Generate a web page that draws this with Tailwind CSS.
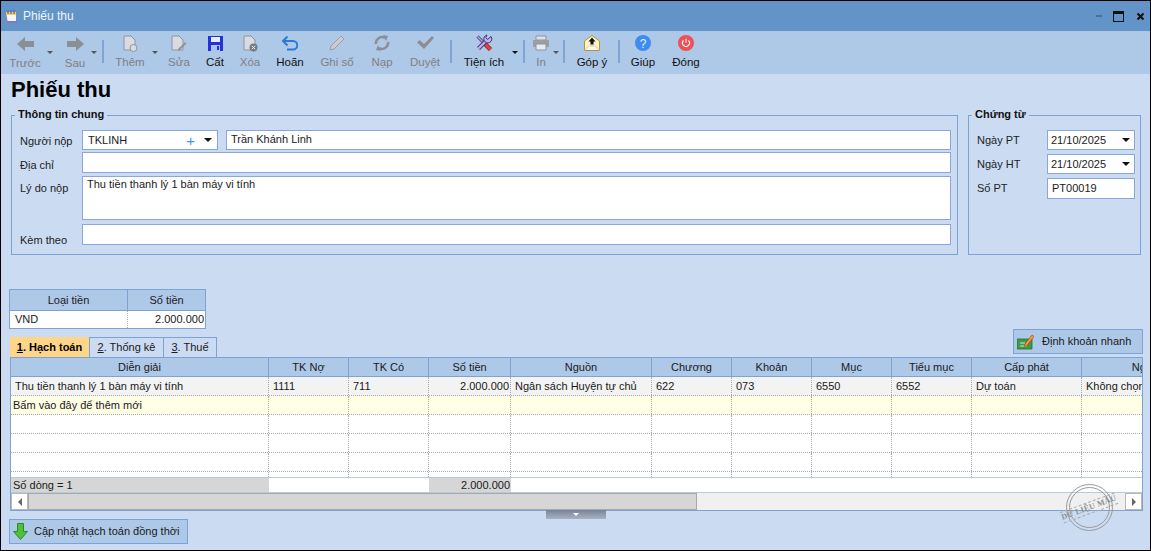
<!DOCTYPE html>
<html lang="en">
  <head>
    <meta charset="UTF-8" />
    <meta name="viewport" content="width=device-width, initial-scale=1.0" />
    <title>Phiếu thu</title>
    <script src="https://cdn.jsdelivr.net/npm/@tailwindcss/browser@4"></script>
  </head>
  <body class="m-0 h-[551px] w-[1151px] overflow-hidden bg-[#cbdcf2] font-['Liberation_Sans',sans-serif] text-[11px] leading-none text-[#1a1a1a]">
    <div class="relative flex h-[551px] w-[1151px] flex-col overflow-hidden border border-black bg-[#cbdcf2]">
      <!-- Title bar -->
      <div class="flex h-[30px] shrink-0 items-center bg-[#6394c8] pl-[3px] text-white">
        <svg class="h-[15px] w-[15px]" viewBox="0 0 15 15">
          <path d="M1 3h10l2 11H3z" fill="#7f78cf" />
          <path d="M2 3h10v9H3.500z" fill="#f4f6fb" />
          <path d="M2 3h10v3H2z" fill="#f3d24e" />
          <path d="M4 1v4M7 1v4M10 1v4" stroke="#6a5db8" stroke-width="1.200" />
        </svg>
        <span class="ml-[4px] text-[12px] text-[#eef4fb]">Phiếu thu</span>
        <div class="ml-auto flex items-center">
          <div class="h-[2px] w-[6px] bg-[#5b6b80]"></div>
          <div class="ml-[11px] h-[11px] w-[11px] border border-t-[3px] border-[#101010]"></div>
          <svg class="ml-[12px] mr-[5px] h-[9px] w-[9px]" viewBox="0 0 9 9">
            <path d="M1.500 1.500l6 6M7.500 1.500l-6 6" stroke="#101010" stroke-width="2" />
          </svg>
        </div>
      </div>

      <!-- Toolbar -->
      <div class="flex h-[43px] shrink-0 items-start bg-[#aec8e8] text-[11.500px]">
        <div class="flex h-[43px] w-[48px] flex-col items-center text-[#808080]">
          <svg class="mt-[5px] h-[16px] w-[17px]" viewBox="0 0 17 16"><path d="M0 8l8-7v4h9v6H8v4z" fill="#8b8f95" /></svg>
          <span class="mt-[6px]">Trước</span>
        </div>
        <div class="-ml-[2px] mt-[20px] h-0 w-0 border-x-[3px] border-t-[3px] border-x-transparent border-t-[#555]"></div>
        <div class="flex h-[43px] w-[44px] flex-col items-center text-[#808080]">
          <svg class="mt-[5px] h-[16px] w-[17px]" viewBox="0 0 17 16"><path d="M17 8L9 1v4H0v6h9v4z" fill="#8b8f95" /></svg>
          <span class="mt-[6px]">Sau</span>
        </div>
        <div class="-ml-[6px] mt-[20px] h-0 w-0 border-x-[3px] border-t-[3px] border-x-transparent border-t-[#555]"></div>
        <div class="ml-[5px] mt-[9px] h-[23px] w-[2px] bg-[#7fa5d6]"></div>
        <div class="-ml-[1px] flex h-[43px] w-[54px] flex-col items-center text-[#808080]">
          <svg class="mt-[4px] h-[17px] w-[15px]" viewBox="0 0 15 17">
            <path d="M1 1h7l4 4v10H1z" fill="#d8dce2" stroke="#8f949b" />
            <circle cx="10.500" cy="13" r="3.500" fill="#d8dce2" stroke="#8f949b" />
          </svg>
          <span class="mt-[5px]">Thêm</span>
        </div>
        <div class="-ml-[5px] mt-[20px] h-0 w-0 border-x-[3px] border-t-[3px] border-x-transparent border-t-[#555]"></div>
        <div class="flex h-[43px] w-[42px] flex-col items-center text-[#808080]">
          <svg class="mt-[4px] h-[17px] w-[16px]" viewBox="0 0 16 17">
            <path d="M1 1h7l4 4v10H1z" fill="#d8dce2" stroke="#8f949b" />
            <path d="M7 14l7-7 1.500 1.500-7 7H7z" fill="#8f949b" />
          </svg>
          <span class="mt-[5px]">Sửa</span>
        </div>
        <div class="flex h-[43px] w-[30px] flex-col items-center text-[#111]">
          <svg class="mt-[4px] h-[16px] w-[15px]" viewBox="0 0 15 16">
            <path d="M0 1h15v15H0z" fill="#2333d6" />
            <path d="M3 2h9v5H3z" fill="#e4ecfa" />
            <path d="M3 10h9v6H3z" fill="#a9c2f2" />
            <path d="M9 11h2v4H9z" fill="#2333d6" />
          </svg>
          <span class="mt-[6px]">Cất</span>
        </div>
        <div class="flex h-[43px] w-[40px] flex-col items-center text-[#808080]">
          <svg class="mt-[4px] h-[17px] w-[15px]" viewBox="0 0 15 17">
            <path d="M1 1h7l4 4v10H1z" fill="#d8dce2" stroke="#8f949b" />
            <circle cx="10.500" cy="12.500" r="4" fill="#777b82" />
            <path d="M8.800 10.800l3.400 3.400M12.200 10.800l-3.400 3.400" stroke="#eee" />
          </svg>
          <span class="mt-[5px]">Xóa</span>
        </div>
        <div class="flex h-[43px] w-[40px] flex-col items-center text-[#111]">
          <svg class="mt-[5px] h-[15px] w-[16px]" viewBox="0 0 16 15" fill="none">
            <path d="M1 5h10a3.800 3.800 0 010 8.500H5" stroke="#2a7ad8" stroke-width="2" />
            <path d="M5.500 0.500L1 5l4.500 4.500" stroke="#2a7ad8" stroke-width="2" />
          </svg>
          <span class="mt-[6px]">Hoãn</span>
        </div>
        <div class="flex h-[43px] w-[54px] flex-col items-center text-[#808080]">
          <svg class="mt-[4px] h-[16px] w-[16px]" viewBox="0 0 16 16">
            <path d="M1 15l1-4L12 1l3 3L5 14z" fill="#c9ccd1" stroke="#9a9ea5" />
          </svg>
          <span class="mt-[6px]">Ghi sổ</span>
        </div>
        <div class="flex h-[43px] w-[36px] flex-col items-center text-[#808080]">
          <svg class="mt-[4px] h-[16px] w-[16px]" viewBox="0 0 16 16" fill="none">
            <path d="M2 9a6 6 0 019-6M14 7a6 6 0 01-9 6" stroke="#8b8f95" stroke-width="2.500" />
            <path d="M9 0l5 1-2 5zM7 16l-5-1 2-5z" fill="#8b8f95" />
          </svg>
          <span class="mt-[6px]">Nạp</span>
        </div>
        <div class="flex h-[43px] w-[50px] flex-col items-center text-[#808080]">
          <svg class="mt-[5px] h-[14px] w-[17px]" viewBox="0 0 17 14">
            <path d="M0 6.500l2.500-2.500 4.500 4L15 0l2 2L7 13z" fill="#8b8f95" />
          </svg>
          <span class="mt-[7px]">Duyệt</span>
        </div>
        <div class="mt-[9px] h-[23px] w-[2px] bg-[#7fa5d6]"></div>
        <div class="flex h-[43px] w-[64px] flex-col items-center text-[#111]">
          <svg class="mt-[3px] h-[18px] w-[18px]" viewBox="0 0 18 18" fill="none">
            <path d="M2.500 2.500l8 8" stroke="#3f3375" stroke-width="3" />
            <path d="M2.500 2.500l8 8" stroke="#b6a6e6" stroke-width="1.500" />
            <path d="M10.500 10.500l5 5" stroke="#8a1d1d" stroke-width="4.500" />
            <path d="M10.500 10.500l5 5" stroke="#e0443e" stroke-width="3" />
            <path d="M3.500 14.500l8-8" stroke="#3f3375" stroke-width="4" />
            <path d="M3.500 14.500l8-8" stroke="#c2b3ee" stroke-width="2.300" />
            <path d="M16 2.500a4 4 0 11-4-1.500l-1.200 2.500 1.700 2z" fill="#c2b3ee" stroke="#3f3375" />
          </svg>
          <span class="mt-[5px]">Tiện ích</span>
        </div>
        <div class="-ml-[4px] mt-[20px] h-0 w-0 border-x-[3px] border-t-[3px] border-x-transparent border-t-[#111]"></div>
        <div class="ml-[5px] mt-[9px] h-[23px] w-[2px] bg-[#7fa5d6]"></div>
        <div class="flex h-[43px] w-[32px] flex-col items-center text-[#808080]">
          <svg class="mt-[4px] h-[16px] w-[16px]" viewBox="0 0 16 16">
            <path d="M3 1h10v4H3z" fill="#dfe1e5" stroke="#8f949b" />
            <path d="M0 5h16v7H0z" fill="#9a9ea5" />
            <path d="M3 9h10v6H3z" fill="#e8eaee" stroke="#8f949b" />
          </svg>
          <span class="mt-[6px]">In</span>
        </div>
        <div class="-ml-[4px] mt-[20px] h-0 w-0 border-x-[3px] border-t-[3px] border-x-transparent border-t-[#555]"></div>
        <div class="ml-[4px] mt-[9px] h-[23px] w-[2px] bg-[#7fa5d6]"></div>
        <div class="flex h-[43px] w-[54px] flex-col items-center text-[#111]">
          <svg class="mt-[4px] h-[16px] w-[16px]" viewBox="0 0 16 16">
            <path d="M0.500 6L8 0.500 15.500 6v9.500H0.500z" fill="#fdf3c8" stroke="#b8962e" />
            <path d="M0.500 15l5-4h5l5 4" fill="#fff" stroke="#d8bb5a" stroke-width="0.700" />
            <path d="M8 2.500l3.500 4H9.500v3h-3v-3H4.500z" fill="#111" />
          </svg>
          <span class="mt-[6px]">Góp ý</span>
        </div>
        <div class="-ml-[1px] mt-[9px] h-[23px] w-[2px] bg-[#7fa5d6]"></div>
        <div class="flex h-[43px] w-[46px] flex-col items-center text-[#111]">
          <svg class="mt-[4px] h-[16px] w-[16px]" viewBox="0 0 16 16">
            <circle cx="8" cy="8" r="8" fill="#3f8cf0" />
            <text x="8" y="12.500" text-anchor="middle" font-size="12" font-family="Liberation Sans" fill="#e8f0ff">?</text>
          </svg>
          <span class="mt-[6px]">Giúp</span>
        </div>
        <div class="flex h-[43px] w-[40px] flex-col items-center text-[#111]">
          <svg class="mt-[4px] h-[16px] w-[16px]" viewBox="0 0 16 16" fill="none">
            <circle cx="8" cy="8" r="8" fill="#ee5055" />
            <path d="M5.500 5.500a3.500 3.500 0 105 0M8 3.800v4" stroke="#fff" stroke-width="1.100" />
          </svg>
          <span class="mt-[6px]">Đóng</span>
        </div>
      </div>

      <!-- Content -->
      <h1 class="ml-[10px] mt-[3px] h-[26px] text-[22px] font-bold leading-[26px] text-black">Phiếu thu</h1>

      <div class="ml-[10px] mt-[12px] flex h-[140px] w-[1130px] gap-[10px]">
        <fieldset class="relative h-[140px] w-[947px] border border-[#7da2d6]">
          <legend class="absolute -top-[7px] left-[3px] bg-[#cbdcf2] px-[3px] font-bold text-[#111]">Thông tin chung</legend>
          <div class="flex flex-col pl-[70px] pr-[6px] pt-[14px]">
            <div class="flex h-[20px] items-center gap-[8px]">
              <span class="-ml-[62px] mt-[2px] w-[54px] whitespace-nowrap text-[#222]">Người nộp</span>
              <div class="flex h-[20px] w-[136px] items-center border border-[#8aa6e0] bg-white pl-[5px] pr-[5px]">
                TKLINH
                <span class="ml-auto text-[15px] leading-none text-[#3d9be0]">+</span>
                <div class="ml-[9px] h-0 w-0 border-x-[4px] border-t-[4px] border-x-transparent border-t-[#111]"></div>
              </div>
              <div class="-mt-[1px] flex h-[20px] flex-1 items-center border border-[#8aa6e0] bg-white pl-[4px]">Trần Khánh Linh</div>
            </div>
            <div class="mt-[2px] flex h-[21px] items-center gap-[8px]">
              <span class="-ml-[62px] mt-[5px] w-[54px] whitespace-nowrap text-[#222]">Địa chỉ</span>
              <div class="h-[21px] flex-1 border border-[#8aa6e0] bg-white"></div>
            </div>
            <div class="mt-[3px] flex h-[44px] items-start gap-[8px]">
              <span class="-ml-[62px] mt-[7px] w-[54px] whitespace-nowrap text-[#222]">Lý do nộp</span>
              <div class="h-[44px] flex-1 border border-[#8aa6e0] bg-white pl-[4px] pt-[2px]">Thu tiền thanh lý 1 bàn máy vi tính</div>
            </div>
            <div class="mt-[4px] flex h-[21px] items-center gap-[8px]">
              <span class="-ml-[62px] mt-[11px] w-[54px] whitespace-nowrap text-[#222]">Kèm theo</span>
              <div class="h-[21px] flex-1 border border-[#8aa6e0] bg-white"></div>
            </div>
          </div>
        </fieldset>

        <fieldset class="relative h-[140px] w-[173px] border border-[#7da2d6]">
          <legend class="absolute -top-[7px] left-[3px] bg-[#cbdcf2] px-[3px] font-bold text-[#111]">Chứng từ</legend>
          <div class="flex flex-col pl-[8px] pr-[5px] pt-[14px]">
            <div class="flex h-[20px] items-center justify-between">
              <span class="text-[#222]">Ngày PT</span>
              <div class="flex h-[20px] w-[88px] items-center border border-[#8aa6e0] bg-white pl-[3px] pr-[4px]">
                21/10/2025
                <div class="ml-auto h-0 w-0 border-x-[4px] border-t-[4px] border-x-transparent border-t-[#111]"></div>
              </div>
            </div>
            <div class="mt-[4px] flex h-[20px] items-center justify-between">
              <span class="text-[#222]">Ngày HT</span>
              <div class="flex h-[20px] w-[88px] items-center border border-[#8aa6e0] bg-white pl-[3px] pr-[4px]">
                21/10/2025
                <div class="ml-auto h-0 w-0 border-x-[4px] border-t-[4px] border-x-transparent border-t-[#111]"></div>
              </div>
            </div>
            <div class="mt-[4px] flex h-[21px] items-center justify-between">
              <span class="text-[#222]">Số PT</span>
              <div class="flex h-[21px] w-[88px] items-center border border-[#8aa6e0] bg-white pl-[4px]">PT00019</div>
            </div>
          </div>
        </fieldset>
      </div>

      <!-- Currency summary -->
      <div class="ml-[8px] mt-[34px] w-[197px] shrink-0 border border-[#7da2d6]">
        <div class="grid h-[20px] grid-cols-[118px_1fr] items-center bg-[#aec8e8] text-center">
          <div class="flex h-full items-center justify-center border-r border-[#7da2d6]">Loại tiền</div>
          <div>Số tiền</div>
        </div>
        <div class="grid h-[18px] grid-cols-[118px_1fr] items-center border-t border-[#7da2d6] bg-white">
          <div class="flex h-full items-center border-r border-dotted border-[#aaa] pl-[5px]">VND</div>
          <div class="pr-[1px] text-right">2.000.000</div>
        </div>
      </div>

      <!-- Tabs row -->
      <div class="ml-[9px] mt-[8px] flex h-[20px] w-[1133px] shrink-0 items-end">
        <div class="flex h-[20px] w-[79px] items-center justify-center bg-[#ffd587] font-bold text-black"><u>1</u>. Hạch toán</div>
        <div class="flex h-[20px] w-[75px] items-center justify-center border border-b-0 border-[#7da2d6] bg-[#cbdcf2]"><u>2</u>. Thống kê</div>
        <div class="flex h-[20px] w-[53px] items-center justify-center border border-b-0 border-l-0 border-[#7da2d6] bg-[#cbdcf2]"><u>3</u>. Thuế</div>
        <div class="mb-[3px] ml-auto flex h-[25px] w-[130px] items-center border border-[#7da2d6] bg-[#aec8e8] pl-[3px]">
          <svg class="h-[16px] w-[17px]" viewBox="0 0 17 16">
            <path d="M0 5h15v10H0z" fill="#3f9a45" stroke="#2a6e30" stroke-width="0.800" />
            <path d="M3 9h5M3 12h7" stroke="#cfeccf" />
            <path d="M8 10L15 1l2 1.500-7 9-2.500 1z" fill="#f0a030" stroke="#b3402a" stroke-width="0.700" />
          </svg>
          <span class="ml-[8px] whitespace-nowrap">Định khoản nhanh</span>
        </div>
      </div>

      <!-- Grid -->
      <div class="ml-[9px] h-[154px] w-[1133px] shrink-0 overflow-hidden border border-t-0 border-[#7da2d6] bg-white">
        <div class="grid h-[20px] grid-cols-[258px_80px_80px_82px_141px_80px_80px_80px_80px_110px_150px] border-y border-[#7da2d6] bg-[#aec8e8] text-center [&>div]:border-r [&>div]:border-[#7da2d6] [&>div]:leading-[18px]">
          <div>Diễn giải</div>
          <div>TK Nợ</div>
          <div>TK Có</div>
          <div>Số tiền</div>
          <div>Nguồn</div>
          <div>Chương</div>
          <div>Khoản</div>
          <div>Mục</div>
          <div>Tiểu mục</div>
          <div>Cấp phát</div>
          <div>Nghiệp vụ</div>
        </div>
        <div class="grid h-[19px] grid-cols-[258px_80px_80px_82px_141px_80px_80px_80px_80px_110px_150px] border-b border-dotted border-[#aaa] bg-[#f3f3f3] [&>div]:border-r [&>div]:border-dotted [&>div]:border-[#aaa] [&>div]:px-[4px] [&>div]:leading-[18px]">
          <div>Thu tiền thanh lý 1 bàn máy vi tính</div>
          <div>1111</div>
          <div>711</div>
          <div class="text-right !pr-[1px]">2.000.000</div>
          <div>Ngân sách Huyện tự chủ</div>
          <div>622</div>
          <div>073</div>
          <div>6550</div>
          <div>6552</div>
          <div>Dự toán</div>
          <div>Không chọn</div>
        </div>
        <div class="grid h-[19px] grid-cols-[258px_80px_80px_82px_141px_80px_80px_80px_80px_110px_150px] border-b border-dotted border-[#aaa] bg-[#ffffe6] [&>div]:border-r [&>div]:border-dotted [&>div]:border-[#aaa] [&>div]:leading-[18px]">
          <div class="pl-[2px]">Bấm vào đây để thêm mới</div>
          <div></div><div></div><div></div><div></div><div></div><div></div><div></div><div></div><div></div><div></div>
        </div>
        <div class="grid h-[19px] grid-cols-[258px_80px_80px_82px_141px_80px_80px_80px_80px_110px_150px] border-b border-dotted border-[#aaa] [&>div]:border-r [&>div]:border-dotted [&>div]:border-[#aaa]">
          <div></div><div></div><div></div><div></div><div></div><div></div><div></div><div></div><div></div><div></div><div></div>
        </div>
        <div class="grid h-[19px] grid-cols-[258px_80px_80px_82px_141px_80px_80px_80px_80px_110px_150px] border-b border-dotted border-[#aaa] [&>div]:border-r [&>div]:border-dotted [&>div]:border-[#aaa]">
          <div></div><div></div><div></div><div></div><div></div><div></div><div></div><div></div><div></div><div></div><div></div>
        </div>
        <div class="grid h-[19px] grid-cols-[258px_80px_80px_82px_141px_80px_80px_80px_80px_110px_150px] border-b border-dotted border-[#aaa] [&>div]:border-r [&>div]:border-dotted [&>div]:border-[#aaa]">
          <div></div><div></div><div></div><div></div><div></div><div></div><div></div><div></div><div></div><div></div><div></div>
        </div>
        <div class="grid h-[5px] grid-cols-[258px_80px_80px_82px_141px_80px_80px_80px_80px_110px_150px] [&>div]:border-r [&>div]:border-dotted [&>div]:border-[#aaa]">
          <div></div><div></div><div></div><div></div><div></div><div></div><div></div><div></div><div></div><div></div><div></div>
        </div>
        <div class="grid h-[16px] grid-cols-[258px_160px_82px_1fr] border-y border-[#b5cbe3] leading-[14px]">
          <div class="bg-[#d6d6d6] pl-[2px]">Số dòng = 1</div>
          <div></div>
          <div class="bg-[#d6d6d6] pr-[1px] text-right">2.000.000</div>
          <div></div>
        </div>
        <div class="flex h-[17px] bg-[#f0f0f0]">
          <div class="flex w-[17px] items-center justify-center border border-[#b8b8b8] bg-white">
            <div class="h-0 w-0 border-y-[4px] border-r-[4px] border-y-transparent border-r-[#666]"></div>
          </div>
          <div class="w-[669px] border border-[#a8a8a8] bg-[#d6d6d6]"></div>
          <div class="ml-auto flex w-[17px] items-center justify-center border border-[#b8b8b8] bg-white">
            <div class="h-0 w-0 border-y-[4px] border-l-[4px] border-y-transparent border-l-[#666]"></div>
          </div>
        </div>
      </div>

      <!-- Splitter handle -->
      <div class="ml-[545px] -mt-[1px] flex h-[9px] w-[60px] shrink-0 items-center justify-center bg-gradient-to-b from-[#77839a] to-[#a9b2c0]">
        <div class="h-0 w-0 border-x-[3px] border-t-[3px] border-x-transparent border-t-white"></div>
      </div>

      <!-- Bottom action -->
      <div class="ml-[8px] flex h-[25px] w-[179px] shrink-0 items-center border border-[#7da2d6] bg-[#aec8e8] pl-[3px]">
        <svg class="h-[17px] w-[15px]" viewBox="0 0 15 17">
          <path d="M4.500 0.500h6v8h4L7.500 16.500 0.500 8.500h4z" fill="#4cc23a" stroke="#2a8a26" />
        </svg>
        <span class="ml-[6px] whitespace-nowrap">Cập nhật hạch toán đồng thời</span>
      </div>

      <!-- Watermark stamp -->
      <div class="absolute left-[1065px] top-[483px] flex h-[47px] w-[47px] items-center justify-center rounded-full border border-[#9a9a9a]">
        <div class="flex h-[41px] w-[41px] items-center justify-center rounded-full border border-[#9a9a9a]">
          <span class="-rotate-[20deg] whitespace-nowrap border-y border-dashed border-[#aaa] py-[1px] font-['Liberation_Serif',serif] text-[8px] font-bold tracking-[0.3px] text-[#8f8f8f]">DỮ LIỆU MẪU</span>
        </div>
      </div>
    </div>
  </body>
</html>
